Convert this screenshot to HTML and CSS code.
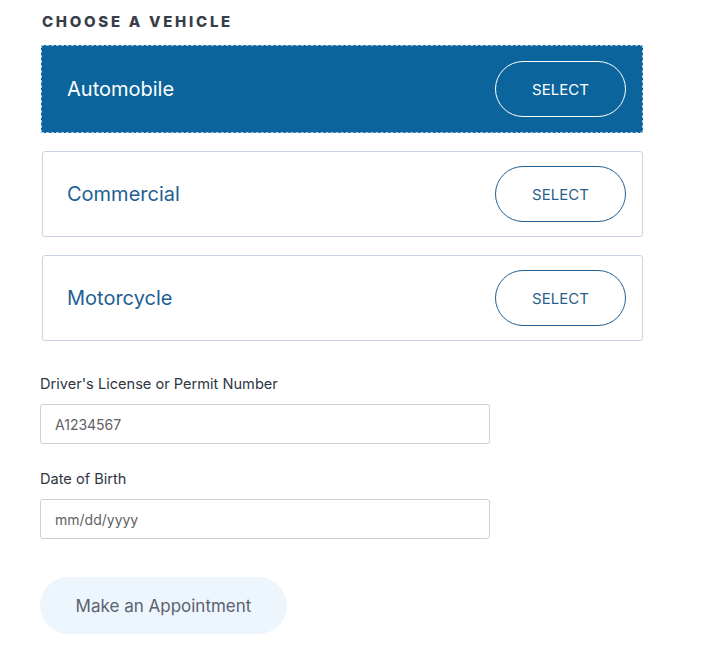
FILE: index.html
```html
<!DOCTYPE html>
<html lang="en">
<head>
<meta charset="utf-8">
<title>Choose a vehicle</title>
<link rel="stylesheet" href="styles.css">
</head>
<body>
<main class="page">
  <h2 class="title">CHOOSE A VEHICLE</h2>
  <div class="cards">
    <div class="card card-active">
      <span class="card-name">Automobile</span>
      <button class="select">SELECT</button>
    </div>
    <div class="card">
      <span class="card-name">Commercial</span>
      <button class="select">SELECT</button>
    </div>
    <div class="card">
      <span class="card-name">Motorcycle</span>
      <button class="select">SELECT</button>
    </div>
  </div>
  <form class="form">
    <label class="field">
      <span class="label">Driver's License or Permit Number</span>
      <input class="input" type="text" placeholder="A1234567">
    </label>
    <label class="field">
      <span class="label">Date of Birth</span>
      <input class="input" type="text" placeholder="mm/dd/yyyy">
    </label>
    <button type="button" class="submit">Make an Appointment</button>
  </form>
</main>
</body>
</html>
```

FILE: styles.css
```css
* { box-sizing: border-box; }
html, body { margin: 0; padding: 0; background: #ffffff; }
body { font-family: "Inter", "Roboto", "Liberation Sans", sans-serif; color: #2f3542; }
.page { padding: 12px 0 0 41px; width: 643px; }
.title {
  margin: 0 0 13px 1px;
  font-size: 15px;
  line-height: 20px;
  font-weight: 800;
  letter-spacing: 2.7px;
  color: #383d4a;
}
.cards { display: flex; flex-direction: column; gap: 18px; }
.card {
  height: 86px;
  border: 1px solid #c8d5e1;
  border-radius: 3px;
  display: flex;
  align-items: center;
  justify-content: space-between;
  padding: 0 16px 0 24px;
  margin-left: 1px;
  background: #fff;
}
.card-active {
  background: #0b649c;
  border: 1px dashed #9cc6e8;
  border-radius: 0;
  height: 88px;
  margin-left: 0;
  padding-left: 25px;
}
.card-name { font-size: 20px; color: #1f5f93; letter-spacing: 0; }
.card-active .card-name { color: #ffffff; }
.select {
  width: 131px;
  height: 56px;
  border-radius: 28px;
  border: 1px solid #1f5f93;
  background: transparent;
  font-family: inherit;
  font-size: 15px;
  color: #2c5f8e;
  letter-spacing: 0;
  cursor: pointer;
}
.card-active .select { border-color: #ffffff; color: #ffffff; }
.form { display: flex; flex-direction: column; margin-top: 34px; margin-left: -1px; }
.field { display: flex; flex-direction: column; gap: 11px; margin-bottom: 26px; }
.label { font-size: 14.6px; line-height: 18px; color: #2f3542; }
.input {
  width: 450px;
  height: 40px;
  border: 1px solid #cfcfcf;
  border-radius: 3px;
  padding: 0 14px;
  font-family: inherit;
  font-size: 14px;
  color: #555;
}
.input::placeholder { color: #5f6166; }
.submit {
  margin-top: 12px;
  width: 247px;
  height: 57px;
  border: none;
  border-radius: 29px;
  background: #eef6fd;
  font-family: inherit;
  font-size: 17px;
  color: #5b6170;
}
```
